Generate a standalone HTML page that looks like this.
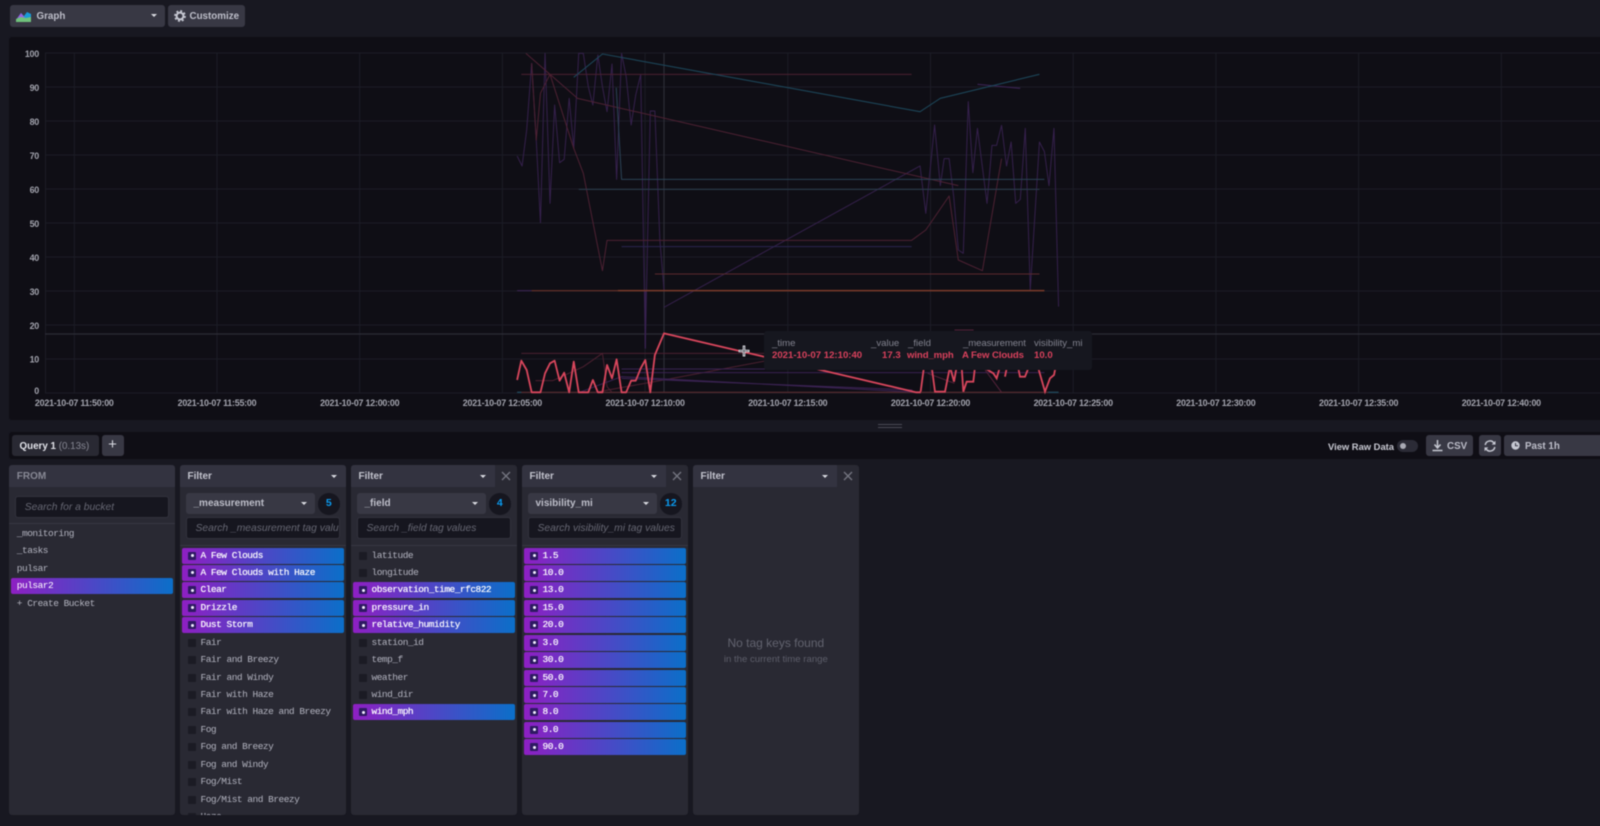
<!DOCTYPE html>
<html lang="en"><head><meta charset="utf-8"><title>Graph</title>
<style>
html,body{margin:0;padding:0;width:1600px;height:826px;overflow:hidden;background:#181821;font-family:"Liberation Sans",sans-serif;color:#bcbcc8}
*{box-sizing:border-box}
#w{position:absolute;left:0;top:0;width:1620px;height:826px;filter:blur(.45px)}
.a{position:absolute}
.btn{position:absolute;background:#383844;border-radius:3px;font-weight:700;font-size:9.8px;color:#bdbec9;line-height:23px;height:21.5px}
.tri{position:absolute;width:0;height:0;border-left:3.5px solid transparent;border-right:3.5px solid transparent;border-top:3.5px solid #d8d9e0}
.card{position:absolute;top:465px;height:350px;width:165.7px;background:#292933;border-radius:3px;overflow:hidden}
.hd{position:absolute;left:0;top:0;height:22px;width:100%;background:#333340;font-size:10px;font-weight:700;line-height:23px;padding-left:7.5px;color:#c2c3cd}
.hd.c{width:143.5px}
.x{position:absolute;left:150px;top:6px;width:10px;height:10px}
.dd{position:absolute;left:6px;top:28px;width:129px;height:21px;background:#383844;border-radius:3px;font-size:10px;font-weight:700;line-height:21px;padding-left:7.5px;color:#bdbec9}
.bd{position:absolute;left:138px;top:28px;width:21.5px;height:21.5px;border-radius:50%;background:#16161f;color:#0a9bf0;font-size:10.5px;font-weight:700;text-align:center;line-height:21.5px}
.in{position:absolute;left:6px;top:52px;width:154px;height:21.5px;background:#16161f;border:1.5px solid #32323d;border-radius:3px;font-size:10.3px;font-style:italic;color:#666773;line-height:18.5px;padding:2px 6px 0 8.5px;white-space:nowrap;overflow:hidden}
.dv{position:absolute;left:0;top:80px;width:100%;height:1px;background:#363642}
.ls{position:absolute;left:2px;top:82.5px;width:162px;height:270px;overflow:hidden}
.r{position:relative;height:16px;margin-bottom:1.45px;border-radius:2px;font-family:"Liberation Mono",monospace;font-size:9.5px;letter-spacing:-.5px;line-height:16px;padding-left:18.5px;color:#b2b3bf;white-space:nowrap}
.r:before{content:"";position:absolute;left:6px;top:4px;width:8px;height:8px;background:#1b1b24;border-radius:1px}
.s{background:linear-gradient(90deg,#8e1fc3,#0b6fc9);color:#fff;text-shadow:0 0 .4px #fff}
.s:before{background:#2e1a62}
.s:after{content:"";position:absolute;left:8.5px;top:6.5px;width:3px;height:3px;background:#f3eeff;border-radius:50%}
.f{position:absolute;left:2px;height:16px;width:162px;border-radius:2px;font-family:"Liberation Mono",monospace;font-size:9.5px;letter-spacing:-.5px;line-height:16px;padding-left:5.5px;color:#b2b3bf}
svg text{font-family:"Liberation Sans",sans-serif;font-weight:700;font-size:8.9px;letter-spacing:-.22px;fill:#a2a3ad}
.tt{position:absolute;left:764px;top:331px;width:327.5px;height:39px;background:#16171f;border-radius:3px;font-size:9.6px}
.tt div{position:absolute;white-space:nowrap}
.g{color:#82838f;top:7px}.v{color:#d9415c;top:19px;font-weight:700}
</style></head><body>
<div id="w">

<div class="btn" style="left:9.5px;top:5px;width:155.5px;padding-left:27px">Graph
<svg class="a" style="left:6.5px;top:5.5px" width="16" height="11" viewBox="0 0 16 11"><path d="M0 9 5 2l3 3 3-4 4 2v5H0z" fill="#1a9ad8"/><path d="M0 9 5 2l4 5 2 2H0z" fill="#9b5fe0"/><path d="M0 11V8l5-2 5 1 5-1v5z" fill="#6fc27c"/></svg>
<span class="tri" style="left:141px;top:9px"></span></div>
<div class="btn" style="left:168px;top:5px;width:77px;padding-left:21.5px">Customize
<svg class="a" style="left:6px;top:5px" width="12" height="12" viewBox="0 0 12 12"><circle cx="6" cy="6" r="3.4" fill="none" stroke="#c6c8d2" stroke-width="2"/><circle cx="6" cy="6" r="5" fill="none" stroke="#c6c8d2" stroke-width="1.8" stroke-dasharray="2 1.93"/></svg></div>

<div class="a" style="left:9.3px;top:37px;width:1611px;height:383px;background:#0f0e15;border-radius:3px 0 0 3px"></div>

<svg class="a" style="left:0;top:0" width="1620" height="826" viewBox="0 0 1620 826">
<g stroke="#1c1c26" stroke-width="1" fill="none">
<path d="M45 53H1620M45 87H1620M45 121H1620M45 155H1620M45 189H1620M45 223H1620M45 257H1620M45 291H1620M45 325H1620M45 359H1620M45 393H1620"/>
<path d="M45.5 53V393M74.3 53V393M217 53V393M359.7 53V393M502.4 53V393M645.1 53V393M787.8 53V393M930.5 53V393M1073.2 53V393M1215.9 53V393M1358.6 53V393M1501.3 53V393"/>
</g>
<g text-anchor="end">
<text x="39" y="57">100</text><text x="39" y="91">90</text><text x="39" y="125">80</text><text x="39" y="159">70</text><text x="39" y="193">60</text><text x="39" y="227">50</text><text x="39" y="261">40</text><text x="39" y="295">30</text><text x="39" y="329">20</text><text x="39" y="362.5">10</text><text x="39" y="394">0</text>
</g>
<g text-anchor="middle">
<text x="74.3" y="406">2021-10-07 11:50:00</text><text x="217" y="406">2021-10-07 11:55:00</text><text x="359.7" y="406">2021-10-07 12:00:00</text><text x="502.4" y="406">2021-10-07 12:05:00</text><text x="645.1" y="406">2021-10-07 12:10:00</text><text x="787.8" y="406">2021-10-07 12:15:00</text><text x="930.5" y="406">2021-10-07 12:20:00</text><text x="1073.2" y="406">2021-10-07 12:25:00</text><text x="1215.9" y="406">2021-10-07 12:30:00</text><text x="1358.6" y="406">2021-10-07 12:35:00</text><text x="1501.3" y="406">2021-10-07 12:40:00</text>
</g>
<path d="M45 334H1620M664 53V392" stroke="#2c2c36" stroke-width="1.2" fill="none"/>

<g transform="translate(480,40) scale(.38265,.33333)" fill="none" stroke-linejoin="round">
<path vector-effect="non-scaling-stroke" stroke="#35204c" stroke-width="1" d="M97 348 110 378 122 270 135 70 147 300 158 548 170 40 183 490 195 195 208 368 220 358 233 175 245 325 258 40 270 40 283 140 295 195 308 45 320 140 332 215 345 72 357 418 370 40 382 110 395 255 407 165 420 103 432 925 445 213 457 213 470 600 481 750"/>
<path vector-effect="non-scaling-stroke" stroke="#35204c" stroke-width="1" d="M481 802 1150 378 1165 520 1188 255 1203 437 1213 356 1226 356 1238 470 1250 630 1263 640 1276 185 1288 398 1300 265 1325 490 1338 316 1350 316 1363 256 1376 378 1388 306 1400 490 1412 478 1425 265 1438 750 1462 306 1475 335 1487 437 1500 265 1512 800"/>
<path vector-effect="non-scaling-stroke" stroke="#3a2252" stroke-width="1.1" d="M432 750V925M1300 133 1412 145"/>
<path vector-effect="non-scaling-stroke" stroke="#4e2133" stroke-width="1" d="M120 40 183 103 255 175 1250 437"/>
<path vector-effect="non-scaling-stroke" stroke="#4e2133" stroke-width="1" d="M135 70 147 300 158 160 183 103 245 325 270 400 320 692 332 601 1128 601 1165 570 1226 468 1250 660 1313 692 1363 356"/>
<path vector-effect="non-scaling-stroke" stroke="#4c2030" stroke-width="1" d="M108 103H1128"/>
<path vector-effect="non-scaling-stroke" stroke="#5a2a2e" stroke-width="1.1" d="M457 702H1462"/>
<path vector-effect="non-scaling-stroke" stroke="#1c4558" stroke-width="1.1" d="M245 112 320 42 1150 215 1203 175 1462 103"/>
<path vector-effect="non-scaling-stroke" stroke="#2b4356" stroke-width="1" d="M356 143 370 418H1475"/>
<path vector-effect="non-scaling-stroke" stroke="#2b3d4e" stroke-width="1" d="M258 448H1462"/>
<path vector-effect="non-scaling-stroke" stroke="#2a2650" stroke-width="1" d="M370 620H1128"/>
<path vector-effect="non-scaling-stroke" stroke="#3f2558" stroke-width="1" d="M97 752H135"/>
<path vector-effect="non-scaling-stroke" stroke="#6a3329" stroke-width="1.2" d="M135 752H360"/>
<path vector-effect="non-scaling-stroke" stroke="#7a3a2a" stroke-width="1.5" d="M360 752H1475"/>
<path vector-effect="non-scaling-stroke" stroke="#5a2a2e" stroke-width="1.2" d="M97 1057H1512"/>
<path vector-effect="non-scaling-stroke" stroke="#4c2030" stroke-width="1" d="M108 940H760"/>
<path vector-effect="non-scaling-stroke" stroke="#4c2030" stroke-width="1" d="M145 1022 190 1022 270 980 320 940 332 1040 345 1057M300 1057 480 1020 760 960"/>
<path vector-effect="non-scaling-stroke" stroke="#3a2252" stroke-width="1" d="M370 987H1475M370 998H1475M260 1057 370 1010 1150 1057M370 1015 1130 1050"/>
<path vector-effect="non-scaling-stroke" stroke="#1c4558" stroke-width="1.3" d="M97 1057H108M1485 1057H1512"/>
<path vector-effect="non-scaling-stroke" stroke="#54223a" stroke-width="1" d="M1240 870H1290M1170 1000 1240 1030M1320 990 1363 1057"/>
<path vector-effect="non-scaling-stroke" stroke="#d8465c" stroke-width="1.8" d="M97 1020 108 962 122 990 135 1057H158L170 1000 183 970 195 962 208 1022 220 998 233 1057 245 965 258 1057H283L295 1020 308 1057H320L332 975 345 1015 357 958 370 1057H382L395 1022H407L420 985 432 960 445 1057 457 945 481 880 1140 1057H1152"/>
</g>
<g transform="translate(700,310) scale(.33333)" fill="none">
<path vector-effect="non-scaling-stroke" stroke="#d8465c" stroke-width="1.8" d="M662 245 672 170M695 170 705 245H735L750 170 762 215 770 170M785 170 790 245 800 215H820L825 170M855 175 880 190 890 205 900 170M915 200 920 175M955 175 960 200H975L985 175M1015 175 1035 245 1050 205 1062 195 1067 170"/>
</g>
</svg>

<div class="tt">
<div class="g" style="left:8px">_time</div><div class="v" style="left:8px">2021-10-07 12:10:40</div>
<div class="g" style="left:107px">_value</div><div class="v" style="left:118px">17.3</div>
<div class="g" style="left:144px">_field</div><div class="v" style="left:143px;letter-spacing:-.1px">wind_mph</div>
<div class="g" style="left:199px;letter-spacing:-.1px">_measurement</div><div class="v" style="left:198px;letter-spacing:-.1px">A Few Clouds</div>
<div class="g" style="left:270px">visibility_mi</div><div class="v" style="left:270px">10.0</div>
</div>
<svg class="a" style="left:737px;top:344px" width="14" height="14" viewBox="0 0 14 14"><path d="M7 1.5V12.5M1.5 7H12.5" stroke="#d6d6dc" stroke-width="2.6"/><path d="M7 2.5V11.5M2.5 7H11.5" stroke="#55555f" stroke-width=".8"/></svg>

<div class="a" style="left:878px;top:424px;width:24px;height:1.2px;background:#4a4a56"></div>
<div class="a" style="left:878px;top:427px;width:24px;height:1.2px;background:#4a4a56"></div>

<div class="a" style="left:9.3px;top:432px;width:1611px;height:26.5px;background:#0f0e15;border-radius:3px 0 0 3px"></div>
<div class="btn" style="left:12px;top:434.7px;width:87px;background:#292933;color:#e2e3ea;padding-left:7.5px">Query 1 <span style="font-weight:400;color:#858692">(0.13s)</span></div>
<div class="btn" style="left:101.5px;top:434.7px;width:22px;text-align:center;font-size:15px;font-weight:400;color:#d8d9e0;line-height:20px">+</div>
<div class="a" style="left:1328px;top:441px;font-size:9.4px;font-weight:700;color:#c9cad3;white-space:nowrap">View Raw Data</div>
<div class="a" style="left:1397px;top:440px;width:21px;height:11.5px;border-radius:6px;background:#2b2b36"></div>
<div class="a" style="left:1399.5px;top:442.5px;width:6.5px;height:6.5px;border-radius:50%;background:#a9aab4"></div>
<div class="btn" style="left:1426px;top:434.7px;width:47px;padding-left:21px">CSV
<svg class="a" style="left:6px;top:5px" width="11" height="12" viewBox="0 0 11 12"><path d="M5.5 0V7M2.5 4.5 5.5 8 8.5 4.5M.5 10.5H10.5" stroke="#c6c8d2" stroke-width="1.5" fill="none"/></svg></div>
<div class="btn" style="left:1479px;top:434.7px;width:22px">
<svg class="a" style="left:5px;top:5px" width="12" height="12" viewBox="0 0 12 12"><path d="M1.2 5A4.8 4.8 0 0 1 10 3.2M10.8 7A4.8 4.8 0 0 1 2 8.8" stroke="#c6c8d2" stroke-width="1.5" fill="none"/><path d="M11.5 .8V4.6H7.7zM.5 11.2V7.4H4.3z" fill="#c6c8d2"/></svg></div>
<div class="btn" style="left:1504px;top:434.7px;width:116px;padding-left:21px;border-radius:3px 0 0 3px">Past 1h
<svg class="a" style="left:7px;top:6.5px" width="9" height="9" viewBox="0 0 9 9"><circle cx="4.5" cy="4.5" r="4.2" fill="#c6c8d2"/><path d="M4.5 2V4.7H7" stroke="#383844" stroke-width="1" fill="none"/></svg></div>

<div class="card" style="left:9.3px">
<div class="hd" style="color:#878894">FROM</div>
<div class="in" style="top:31px;width:154px">Search for a bucket</div>
<div class="dv" style="top:58px"></div>
<div class="f" style="top:61px">_monitoring</div>
<div class="f" style="top:78.4px">_tasks</div>
<div class="f" style="top:95.8px">pulsar</div>
<div class="f" style="top:113.2px;background:linear-gradient(90deg,#8e1fc3,#0b6fc9);color:#fff">pulsar2</div>
<div class="f" style="top:130.6px">+ Create Bucket</div>
</div>

<div class="card" style="left:180px">
<div class="hd">Filter<span class="tri" style="left:151px;top:9.5px"></span></div>
<div class="dd">_measurement<span class="tri" style="left:114.5px;top:9px"></span></div><div class="bd">5</div>
<div class="in">Search _measurement tag values</div><div class="dv"></div>
<div class="ls">
<div class="r s">A Few Clouds</div><div class="r s">A Few Clouds with Haze</div><div class="r s">Clear</div><div class="r s">Drizzle</div><div class="r s">Dust Storm</div><div class="r">Fair</div><div class="r">Fair and Breezy</div><div class="r">Fair and Windy</div><div class="r">Fair with Haze</div><div class="r">Fair with Haze and Breezy</div><div class="r">Fog</div><div class="r">Fog and Breezy</div><div class="r">Fog and Windy</div><div class="r">Fog/Mist</div><div class="r">Fog/Mist and Breezy</div><div class="r">Haze</div>
</div></div>

<div class="card" style="left:351px">
<div class="hd c">Filter<span class="tri" style="left:129px;top:9.5px"></span></div>
<svg class="x" viewBox="0 0 10 10"><path d="M1 1 9 9M9 1 1 9" stroke="#73747f" stroke-width="1.4"/></svg>
<div class="dd">_field<span class="tri" style="left:114.5px;top:9px"></span></div><div class="bd">4</div>
<div class="in">Search _field tag values</div><div class="dv"></div>
<div class="ls">
<div class="r">latitude</div><div class="r">longitude</div><div class="r s">observation_time_rfc822</div><div class="r s">pressure_in</div><div class="r s">relative_humidity</div><div class="r">station_id</div><div class="r">temp_f</div><div class="r">weather</div><div class="r">wind_dir</div><div class="r s">wind_mph</div>
</div></div>

<div class="card" style="left:522px">
<div class="hd c">Filter<span class="tri" style="left:129px;top:9.5px"></span></div>
<svg class="x" viewBox="0 0 10 10"><path d="M1 1 9 9M9 1 1 9" stroke="#73747f" stroke-width="1.4"/></svg>
<div class="dd">visibility_mi<span class="tri" style="left:114.5px;top:9px"></span></div><div class="bd">12</div>
<div class="in">Search visibility_mi tag values</div><div class="dv"></div>
<div class="ls">
<div class="r s">1.5</div><div class="r s">10.0</div><div class="r s">13.0</div><div class="r s">15.0</div><div class="r s">20.0</div><div class="r s">3.0</div><div class="r s">30.0</div><div class="r s">50.0</div><div class="r s">7.0</div><div class="r s">8.0</div><div class="r s">9.0</div><div class="r s">90.0</div>
</div></div>

<div class="card" style="left:693px">
<div class="hd c">Filter<span class="tri" style="left:129px;top:9.5px"></span></div>
<svg class="x" viewBox="0 0 10 10"><path d="M1 1 9 9M9 1 1 9" stroke="#73747f" stroke-width="1.4"/></svg>
<div class="a" style="left:0;width:100%;top:171px;text-align:center;font-size:12px;color:#62636f">No tag keys found</div>
<div class="a" style="left:0;width:100%;top:189px;text-align:center;font-size:9.6px;color:#5d5e6a">in the current time range</div>
</div>

</div>
</body></html>
